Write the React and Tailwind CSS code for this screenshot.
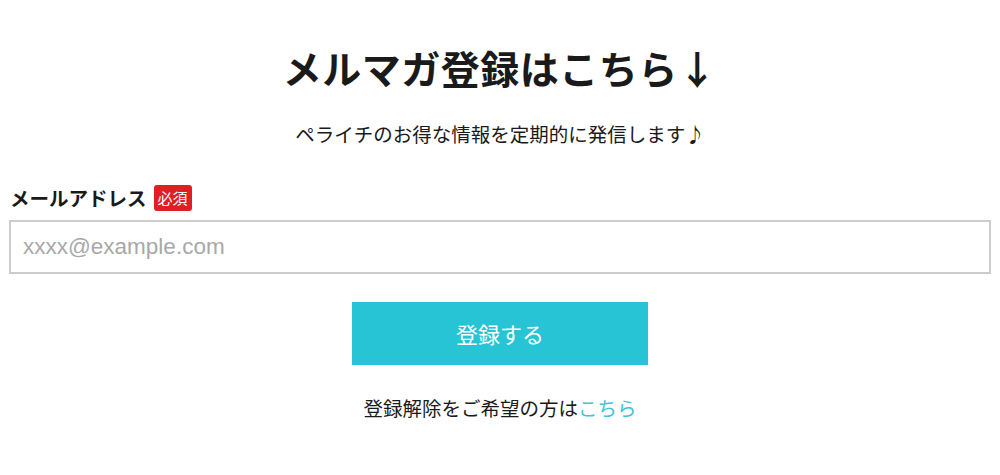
export default function App() {
  return (
    <div
      className="min-h-screen bg-white text-[#1a1a1a]"
      style={{ fontFamily: '"Noto Sans CJK JP", "Noto Sans", sans-serif' }}
    >
      <div className="px-[9px] pt-[42px]">
        <h1 className="text-center text-[39px] font-bold leading-[50px] tracking-[0.5px]">
          メルマガ登録はこちら↓
        </h1>
        <p className="mt-[29px] text-center text-[19.5px] leading-[26px]">
          ペライチのお得な情報を定期的に発信します♪
        </p>

        <form className="mt-[38px]" onSubmit={(e) => e.preventDefault()}>
          <label className="flex items-center gap-[7px] pl-px">
            <span className="text-[19.5px] font-bold leading-[26px]">メールアドレス</span>
            <span className="rounded-[3px] bg-[#e01f22] px-[4px] text-[15px] leading-[26px] text-white">
              必須
            </span>
          </label>
          <input
            type="email"
            placeholder="xxxx@example.com"
            className="mt-[9px] block h-[54px] w-full border-2 border-[#cccccc] px-[12px] text-[22.5px] placeholder:text-[#a8a8a8] outline-none"
            style={{ fontFamily: '"Liberation Sans", Arial, sans-serif' }}
          />
          <div className="mt-[28px] flex justify-center">
            <button
              type="submit"
              className="h-[63px] w-[296px] bg-[#27c4d5] text-[22px] text-white"
            >
              登録する
            </button>
          </div>
        </form>

        <p className="mt-[30px] text-center text-[19.5px] leading-[26px]">
          登録解除をご希望の方は
          <a href="#" className="text-[#3fc3d6]">
            こちら
          </a>
        </p>
      </div>
    </div>
  );
}
